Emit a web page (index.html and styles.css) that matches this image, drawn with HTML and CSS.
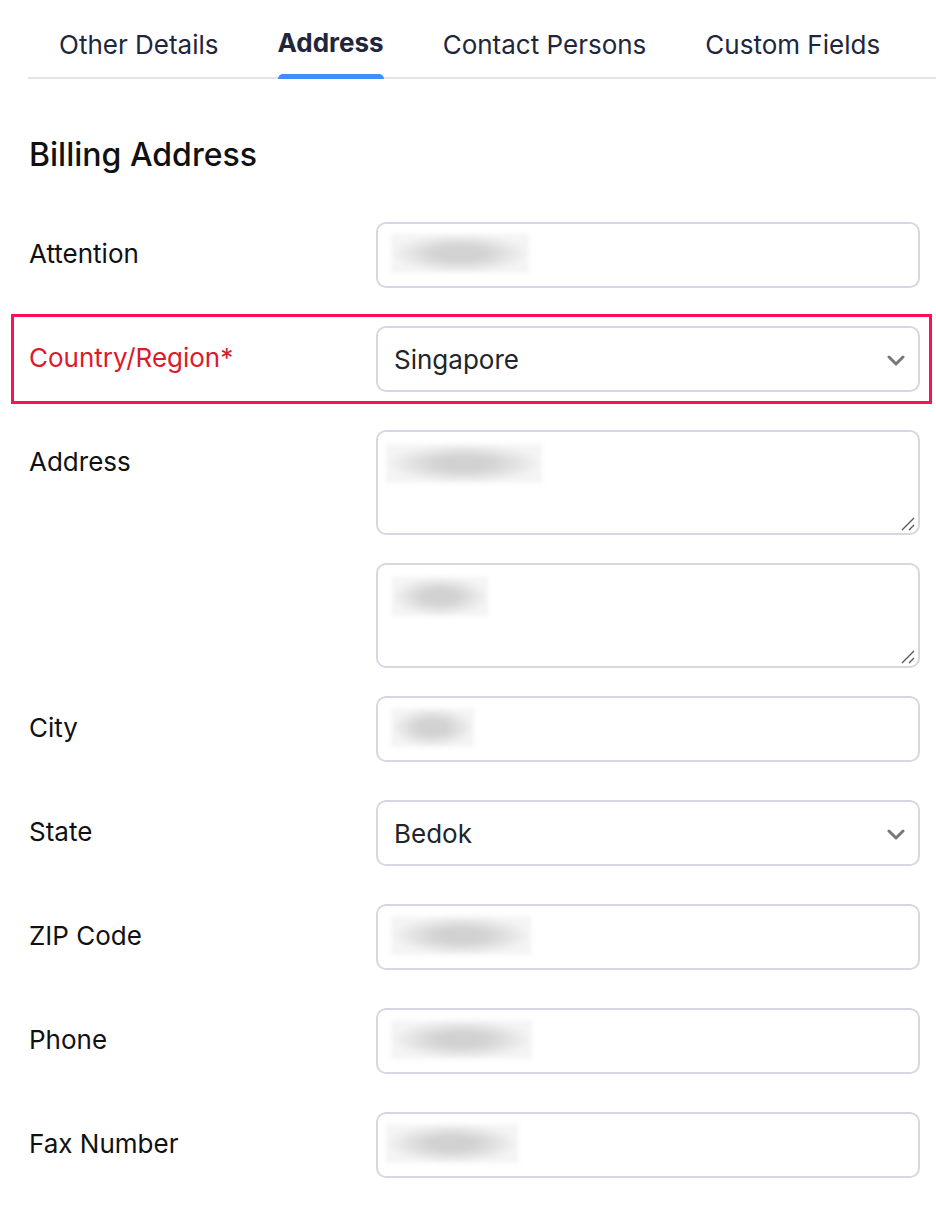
FILE: index.html
```html
<!DOCTYPE html>
<html lang="en">
<head>
    <meta charset="UTF-8">
    <meta name="viewport" content="width=device-width, initial-scale=1.0">
    <title>Address</title>
    <link rel="stylesheet" href="styles.css">
</head>
<body>
    <nav class="tabs">
        <a class="tab">Other Details</a>
        <a class="tab active">Address</a>
        <a class="tab">Contact Persons</a>
        <a class="tab">Custom Fields</a>
    </nav>

    <h2 class="section-title">Billing Address</h2>

    <div class="form">
        <div class="row">
            <label class="label">Attention</label>
            <div class="field"><span class="masked" style="width: 138px"></span></div>
        </div>

        <div class="row row-highlight">
            <label class="label label-required">Country/Region*</label>
            <div class="field field-select">
                <span class="value">Singapore</span>
                <svg class="chevron" width="18" height="11" viewBox="0 0 18 11"><polyline points="2,2 9,9 16,2" fill="none" stroke="#77777f" stroke-width="3" stroke-linecap="round" stroke-linejoin="round"/></svg>
            </div>
        </div>

        <div class="row row-tight">
            <label class="label">Address</label>
            <div class="stack">
                <div class="field field-area">
                    <span class="masked" style="width: 156px; margin-left: -5px"></span>
                    <svg class="grip" width="14" height="14" viewBox="0 0 14 14"><path d="M1 13 L13 1 M8 13 L13 8" stroke="#5a5a5a" stroke-width="1.4"/></svg>
                </div>
                <div class="field field-area">
                    <span class="masked" style="width: 96px; margin-left: 1px"></span>
                    <svg class="grip" width="14" height="14" viewBox="0 0 14 14"><path d="M1 13 L13 1 M8 13 L13 8" stroke="#5a5a5a" stroke-width="1.4"/></svg>
                </div>
            </div>
        </div>

        <div class="row">
            <label class="label">City</label>
            <div class="field"><span class="masked" style="width: 83px"></span></div>
        </div>

        <div class="row">
            <label class="label">State</label>
            <div class="field field-select">
                <span class="value">Bedok</span>
                <svg class="chevron" width="18" height="11" viewBox="0 0 18 11"><polyline points="2,2 9,9 16,2" fill="none" stroke="#77777f" stroke-width="3" stroke-linecap="round" stroke-linejoin="round"/></svg>
            </div>
        </div>

        <div class="row">
            <label class="label">ZIP Code</label>
            <div class="field"><span class="masked" style="width: 140px"></span></div>
        </div>

        <div class="row">
            <label class="label">Phone</label>
            <div class="field"><span class="masked" style="width: 141px"></span></div>
        </div>

        <div class="row">
            <label class="label">Fax Number</label>
            <div class="field"><span class="masked" style="width: 132px; margin-left: -5px"></span></div>
        </div>
    </div>
</body>
</html>
```

FILE: styles.css
```css
body {
    margin: 0;
    padding: 0;
    background: #ffffff;
    font-family: Inter, "Noto Sans", Arial, sans-serif;
    color: #111111;
}

/* tab strip */
.tabs {
    display: flex;
    gap: 59px;
    margin-left: 28px;
    padding-left: 31px;
    border-bottom: 2px solid #e3e3e6;
}
.tab {
    position: relative;
    padding: 29px 0 16px;
    font-size: 26px;
    line-height: 32px;
    color: #21263c;
    cursor: pointer;
}
.tab.active {
    font-weight: 700;
    margin-top: -2px;
    padding-bottom: 18px;
}
.tab.active::after {
    content: "";
    position: absolute;
    left: 0;
    right: 0;
    bottom: -2px;
    height: 5px;
    background: #408dfb;
    border-radius: 5px 5px 0 0;
}

.section-title {
    margin: 56px 0 47px 29px;
    font-size: 32px;
    line-height: 40px;
    font-weight: 500;
    color: #111111;
}

/* form rows */
.form {
    padding: 0 16px 0 28px;
}
.row {
    position: relative;
    display: flex;
    align-items: flex-start;
    margin-bottom: 38px;
}
.row-tight {
    margin-bottom: 28px;
}
.row-highlight::before {
    content: "";
    position: absolute;
    top: -12px;
    bottom: -12px;
    left: -17px;
    right: -12px;
    border: 3px solid #ff0f55;
    pointer-events: none;
}
.label {
    flex: 0 0 348px;
    padding: 16px 0 0 1px;
    box-sizing: border-box;
    font-size: 26px;
    line-height: 32px;
    color: #111111;
}
.label-required {
    color: #dc1a2d;
}

.stack {
    flex: 1;
    display: flex;
    flex-direction: column;
    gap: 28px;
}
.field {
    position: relative;
    flex: 1;
    display: flex;
    align-items: center;
    height: 66px;
    box-sizing: border-box;
    padding: 0 13px 4px 13px;
    border: 2px solid #d8d6e4;
    border-radius: 10px;
    background: #ffffff;
}
.field-select {
    padding: 0 13px 0 16px;
    justify-content: space-between;
}
.field-area {
    flex: none;
    height: 105px;
    align-items: flex-start;
    padding-top: 12px;
}
.value {
    font-size: 26px;
    color: #212529;
}
.chevron {
    display: block;
    margin-top: 2px;
}
.grip {
    position: absolute;
    right: 3px;
    bottom: 2px;
}

/* values that are hidden in the capture */
.masked {
    display: block;
    height: 39px;
    background: radial-gradient(ellipse closest-side, #d2d2d3 35%, #f4f4f4 100%);
    filter: blur(2px);
}
```
